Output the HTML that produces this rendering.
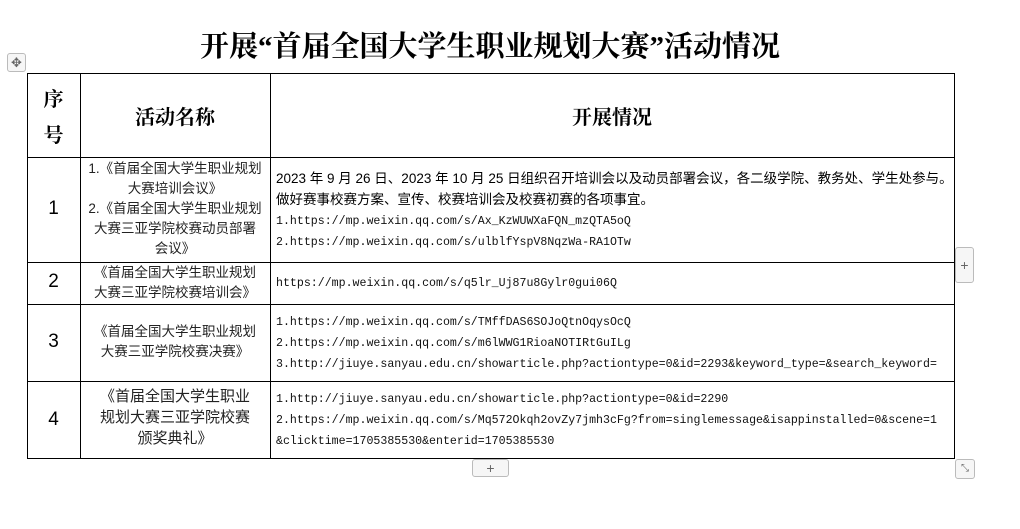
<!DOCTYPE html>
<html><head><meta charset="utf-8"><style>
body{margin:0;width:1020px;height:529px;background:#fff;position:relative;overflow:hidden;font-family:"Liberation Sans","Noto Sans CJK SC",sans-serif;color:#000}
.a{position:absolute}
.t{left:0;width:980px;top:27px;text-align:center;font-family:"Liberation Serif","Noto Serif CJK SC",serif;font-weight:bold;font-size:29px;line-height:40px}
.h{background:#000}
.c{text-align:center;font-size:13.5px;line-height:20px;color:#222}
.m{font-family:"Liberation Mono",monospace;font-size:11.6px;letter-spacing:0;white-space:nowrap;color:#111}
.z{font-size:13.5px;white-space:nowrap}
.n{font-size:19px;text-align:center;width:53px;left:27px}
.hd{font-family:"Noto Serif CJK SC",serif;font-weight:bold;font-size:20px;text-align:center}
.btn{border:1px solid #bbb;border-radius:3px;background:#f6f6f6;color:#666;text-align:center;font-size:14px;box-sizing:border-box}
</style></head><body>
<div class="a t">开展“首届全国大学生职业规划大赛”活动情况</div>
<div class="a btn" style="left:7px;top:53px;width:19px;height:19px;font-size:13px;line-height:17px">✥</div>
<div class="a h" style="left:27px;top:73px;width:928px;height:1px"></div>
<div class="a h" style="left:27px;top:157px;width:928px;height:1px"></div>
<div class="a h" style="left:27px;top:262px;width:928px;height:1px"></div>
<div class="a h" style="left:27px;top:304px;width:928px;height:1px"></div>
<div class="a h" style="left:27px;top:381px;width:928px;height:1px"></div>
<div class="a h" style="left:27px;top:458px;width:928px;height:1px"></div>
<div class="a h" style="left:27px;top:73px;width:1px;height:386px"></div>
<div class="a h" style="left:80px;top:73px;width:1px;height:386px"></div>
<div class="a h" style="left:270px;top:73px;width:1px;height:386px"></div>
<div class="a h" style="left:954px;top:73px;width:1px;height:386px"></div>
<div class="a hd" style="left:27px;width:53px;top:80px;line-height:36px">序<br>号</div>
<div class="a hd" style="left:80px;width:190px;top:102px;line-height:28px">活动名称</div>
<div class="a hd" style="left:270px;width:684px;top:102px;line-height:28px">开展情况</div>
<div class="a n" style="top:198px">1</div>
<div class="a n" style="top:271px">2</div>
<div class="a n" style="top:331px">3</div>
<div class="a n" style="top:409px">4</div>
<div class="a c" style="left:80px;width:190px;top:159px">1.《首届全国大学生职业规划<br>大赛培训会议》<br>2.《首届全国大学生职业规划<br>大赛三亚学院校赛动员部署<br>会议》</div>
<div class="a c" style="left:80px;width:190px;top:263px">《首届全国大学生职业规划<br>大赛三亚学院校赛培训会》</div>
<div class="a c" style="left:80px;width:190px;top:322px">《首届全国大学生职业规划<br>大赛三亚学院校赛决赛》</div>
<div class="a c" style="left:80px;width:190px;top:386px;font-size:15px;line-height:21px">《首届全国大学生职业<br>规划大赛三亚学院校赛<br>颁奖典礼》</div>
<div class="a z" style="left:276px;top:168px;line-height:21px">2023 年 9 月 26 日、2023 年 10 月 25 日组织召开培训会以及动员部署会议，各二级学院、教务处、学生处参与。<br>做好赛事校赛方案、宣传、校赛培训会及校赛初赛的各项事宜。</div>
<div class="a m" style="left:276px;top:211px;line-height:21px">1.https://mp.weixin.qq.com/s/Ax_KzWUWXaFQN_mzQTA5oQ<br>2.https://mp.weixin.qq.com/s/ulblfYspV8NqzWa-RA1OTw</div>
<div class="a m" style="left:276px;top:274px;line-height:20px">https://mp.weixin.qq.com/s/q5lr_Uj87u8Gylr0gui06Q</div>
<div class="a m" style="left:276px;top:312px;line-height:21px">1.https://mp.weixin.qq.com/s/TMffDAS6SOJoQtnOqysOcQ<br>2.https://mp.weixin.qq.com/s/m6lWWG1RioaNOTIRtGuILg<br>3.http://jiuye.sanyau.edu.cn/showarticle.php?actiontype=0&amp;id=2293&amp;keyword_type=&amp;search_keyword=</div>
<div class="a m" style="left:276px;top:389px;line-height:21px">1.http://jiuye.sanyau.edu.cn/showarticle.php?actiontype=0&amp;id=2290<br>2.https://mp.weixin.qq.com/s/Mq572Okqh2ovZy7jmh3cFg?from=singlemessage&amp;isappinstalled=0&amp;scene=1<br>&amp;clicktime=1705385530&amp;enterid=1705385530</div>
<div class="a btn" style="left:955px;top:247px;width:19px;height:36px;line-height:34px">+</div>
<div class="a btn" style="left:472px;top:459px;width:37px;height:18px;line-height:16px">+</div>
<div class="a btn" style="left:955px;top:459px;width:20px;height:20px;font-size:10px;line-height:18px">⤡</div>
</body></html>
